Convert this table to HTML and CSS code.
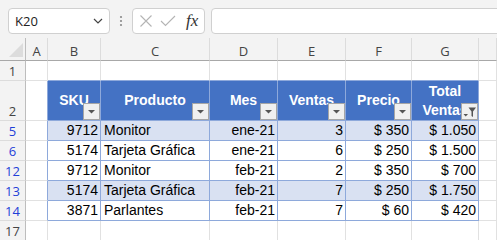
FILE: index.html
```html
<!DOCTYPE html>
<html lang="es">
<head>
    <meta charset="UTF-8">
    <title>Ventas filtradas</title>
    <link rel="stylesheet" href="styles.css">
</head>
<body>
    <div class="formula-bar">
        <div class="name-box">
            <span>K20</span>
            <svg width="10" height="6" viewBox="0 0 10 6"><polyline points="1,1 5,5 9,1" fill="none" stroke="#444" stroke-width="1.2"/></svg>
        </div>
        <div class="grip">
            <svg width="4" height="12" viewBox="0 0 4 12"><circle cx="2" cy="2" r="1.1" fill="#8a8a8a"/><circle cx="2" cy="6" r="1.1" fill="#8a8a8a"/><circle cx="2" cy="10" r="1.1" fill="#8a8a8a"/></svg>
        </div>
        <div class="fx-buttons">
            <svg width="14" height="14" viewBox="0 0 14 14"><path d="M1.5 1.5 L12.5 12.5 M12.5 1.5 L1.5 12.5" stroke="#b4b4b4" stroke-width="1.1"/></svg>
            <svg width="16" height="14" viewBox="0 0 16 14"><polyline points="1,7 5.5,11.5 15,2" fill="none" stroke="#b4b4b4" stroke-width="1.1"/></svg>
            <span class="fx">fx</span>
        </div>
        <div class="formula-input"></div>
    </div>

    <div class="sheet">
        <!-- encabezados de columna -->
        <div class="corner"><svg width="16" height="14" viewBox="0 0 16 14"><polygon points="16,0 16,14 2,14" fill="#dcdcdc"/></svg></div>
        <div class="ch">A</div>
        <div class="ch">B</div>
        <div class="ch">C</div>
        <div class="ch">D</div>
        <div class="ch">E</div>
        <div class="ch">F</div>
        <div class="ch">G</div>
        <div class="ch"></div>

        <!-- fila 1 -->
        <div class="rh">1</div>
        <div class="c"></div>
        <div class="c edge-t"></div>
        <div class="c edge-t"></div>
        <div class="c edge-t"></div>
        <div class="c edge-t"></div>
        <div class="c edge-t"></div>
        <div class="c edge-t"></div>
        <div class="c"></div>

        <!-- fila 2: encabezados de tabla -->
        <div class="rh">2</div>
        <div class="c edge-l"></div>
        <div class="th"><span>SKU</span><span class="filter"><svg width="15" height="15" viewBox="0 0 15 15"><polygon points="4,6 11,6 7.5,9.5" fill="#555"/></svg></span></div>
        <div class="th"><span>Producto</span><span class="filter"><svg width="15" height="15" viewBox="0 0 15 15"><polygon points="4,6 11,6 7.5,9.5" fill="#555"/></svg></span></div>
        <div class="th"><span>Mes</span><span class="filter"><svg width="15" height="15" viewBox="0 0 15 15"><polygon points="4,6 11,6 7.5,9.5" fill="#555"/></svg></span></div>
        <div class="th"><span>Ventas</span><span class="filter"><svg width="15" height="15" viewBox="0 0 15 15"><polygon points="4,6 11,6 7.5,9.5" fill="#555"/></svg></span></div>
        <div class="th"><span>Precio</span><span class="filter"><svg width="15" height="15" viewBox="0 0 15 15"><polygon points="4,6 11,6 7.5,9.5" fill="#555"/></svg></span></div>
        <div class="th"><span>Total Ventas</span><span class="filter"><svg width="15" height="15" viewBox="0 0 15 15"><polygon points="1.5,10 6,10 3.75,12.5" fill="#555"/><path d="M6.5 3.5 H14 L11 7.5 V13 L9.5 12 V7.5 Z" fill="#555"/></svg></span></div>
        <div class="c"></div>

        <!-- fila 5 -->
        <div class="rh filtered">5</div>
        <div class="c edge-l"></div>
        <div class="c t band num">9712</div>
        <div class="c t band">Monitor</div>
        <div class="c t band num">ene-21</div>
        <div class="c t band num">3</div>
        <div class="c t band num">$ 350</div>
        <div class="c t band num">$ 1.050</div>
        <div class="c"></div>

        <!-- fila 6 -->
        <div class="rh filtered">6</div>
        <div class="c edge-l"></div>
        <div class="c t num">5174</div>
        <div class="c t">Tarjeta Gráfica</div>
        <div class="c t num">ene-21</div>
        <div class="c t num">6</div>
        <div class="c t num">$ 250</div>
        <div class="c t num">$ 1.500</div>
        <div class="c"></div>

        <!-- fila 12 -->
        <div class="rh filtered">12</div>
        <div class="c edge-l"></div>
        <div class="c t num">9712</div>
        <div class="c t">Monitor</div>
        <div class="c t num">feb-21</div>
        <div class="c t num">2</div>
        <div class="c t num">$ 350</div>
        <div class="c t num">$ 700</div>
        <div class="c"></div>

        <!-- fila 13 -->
        <div class="rh filtered">13</div>
        <div class="c edge-l"></div>
        <div class="c t band num">5174</div>
        <div class="c t band">Tarjeta Gráfica</div>
        <div class="c t band num">feb-21</div>
        <div class="c t band num">7</div>
        <div class="c t band num">$ 250</div>
        <div class="c t band num">$ 1.750</div>
        <div class="c"></div>

        <!-- fila 14 -->
        <div class="rh filtered">14</div>
        <div class="c edge-l"></div>
        <div class="c t num">3871</div>
        <div class="c t">Parlantes</div>
        <div class="c t num">feb-21</div>
        <div class="c t num">7</div>
        <div class="c t num">$ 60</div>
        <div class="c t num">$ 420</div>
        <div class="c"></div>

        <!-- fila 17 -->
        <div class="rh">17</div>
        <div class="c"></div>
        <div class="c"></div>
        <div class="c"></div>
        <div class="c"></div>
        <div class="c"></div>
        <div class="c"></div>
        <div class="c"></div>
        <div class="c"></div>
    </div>
</body>
</html>
```

FILE: styles.css
```css
* {
    margin: 0;
    padding: 0;
    box-sizing: border-box;
}

body {
    background: #f3f3f3;
    font-family: "Open Sans", "Noto Sans", sans-serif;
    overflow: hidden;
    width: 497px;
    height: 240px;
}

/* barra de fórmulas */
.formula-bar {
    display: flex;
    height: 38px;
    padding: 8px 0 0 8px;
}

.name-box {
    width: 102px;
    height: 26px;
    background: #fff;
    border: 1px solid #d0d0d0;
    border-radius: 4px;
    display: flex;
    align-items: center;
    justify-content: space-between;
    padding: 0 6px 0 6px;
    font-size: 13px;
    color: #222;
}

.grip {
    width: 22px;
    display: flex;
    align-items: center;
    justify-content: center;
    height: 26px;
}

.fx-buttons {
    width: 73px;
    height: 26px;
    background: #fff;
    border: 1px solid #d0d0d0;
    border-radius: 4px;
    display: flex;
    align-items: center;
    gap: 7px;
    padding-left: 6px;
}

.fx {
    font-family: "Liberation Serif", serif;
    font-style: italic;
    font-size: 17px;
    color: #333;
    margin-left: 3px;
}

.formula-input {
    flex: 1;
    height: 26px;
    margin-left: 6px;
    margin-right: -6px;
    background: #fff;
    border: 1px solid #d0d0d0;
    border-radius: 4px;
}

/* hoja */
.sheet {
    display: grid;
    grid-template-columns: 26px 22px 53px 109px 68px 68px 66px 67px 1fr;
    grid-template-rows: 23px 20px 40px repeat(6, 20px);
    background: #fff;
}

.corner {
    background: #f3f3f3;
    border-right: 1px solid #bdbdbd;
    border-bottom: 1px solid #a8a8a8;
    display: flex;
    align-items: flex-end;
    justify-content: flex-end;
    padding: 0 2px 3px 0;
}

.ch {
    background: #f3f3f3;
    border-bottom: 1px solid #a8a8a8;
    border-right: 1px solid #dcdcdc;
    font-size: 13px;
    color: #444;
    display: flex;
    align-items: center;
    justify-content: center;
    padding-top: 3px;
}

.rh {
    background: #f3f3f3;
    border-right: 1px solid #bdbdbd;
    border-bottom: 1px solid #dcdcdc;
    font-size: 13px;
    color: #444;
    display: flex;
    align-items: flex-end;
    justify-content: center;
    line-height: 18px;
}

.rh.filtered {
    color: #1f3fd8;
}

.c {
    border-right: 1px solid #e1e1e1;
    border-bottom: 1px solid #e1e1e1;
    font-family: "Liberation Sans", Arial, sans-serif;
    font-size: 14px;
    color: #000;
    display: flex;
    align-items: flex-end;
    padding: 0 2px 1px 3px;
    line-height: 17px;
    white-space: nowrap;
    overflow: hidden;
}

.c.t {
    border-right-color: #8ea9db;
    border-bottom-color: #8ea9db;
}

.c.edge-l {
    border-right-color: #8ea9db;
}

.c.edge-t {
    border-bottom-color: #8ea9db;
}

.c.band {
    background: #d9e1f2;
}

.c.num {
    justify-content: flex-end;
}

/* encabezados de tabla */
.th {
    position: relative;
    background: #4472c4;
    border-right: 1px solid #8ea9db;
    border-bottom: 1px solid #8ea9db;
    color: #fff;
    font-family: "Liberation Sans", Arial, sans-serif;
    font-weight: bold;
    font-size: 14px;
    line-height: 19px;
    display: flex;
    align-items: center;
    justify-content: center;
    text-align: center;
    padding: 0 2px;
    overflow: hidden;
}

.filter {
    position: absolute;
    right: 0;
    bottom: 0;
    width: 17px;
    height: 17px;
    background: #f0f0f0;
    border: 1px solid #a6a6a6;
    display: flex;
}
```
